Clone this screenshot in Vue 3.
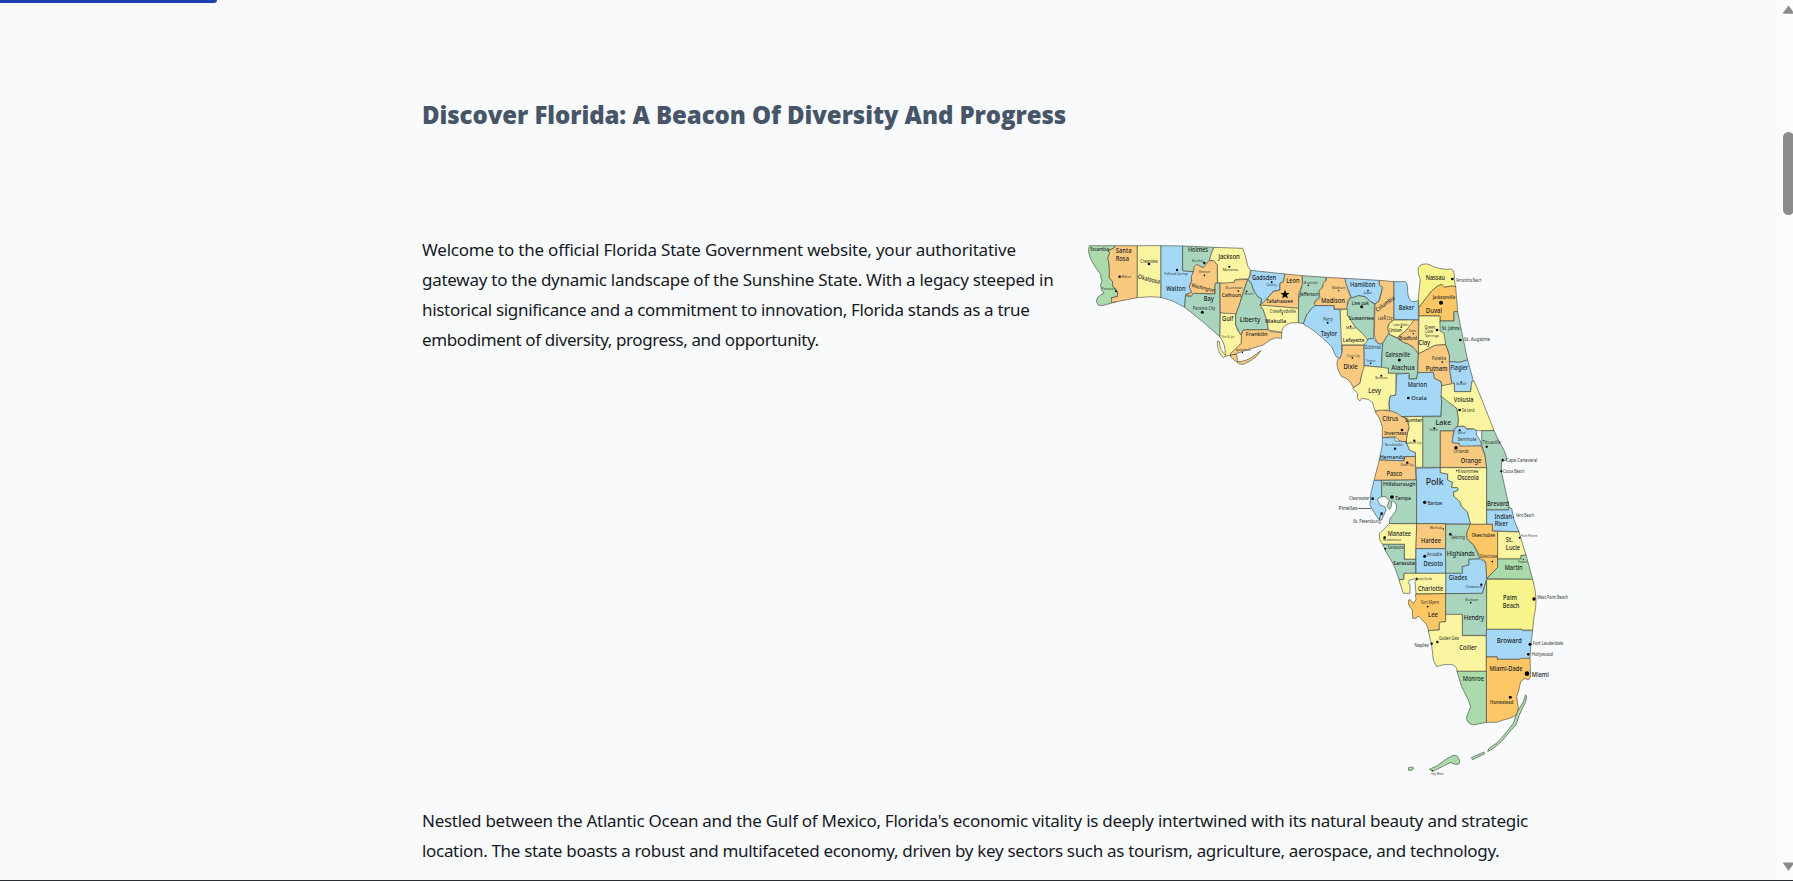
<script setup>
const G = '#abdaab', T = '#a9d4bd', O = '#fac980', D = '#fec766', Y = '#fbf4a0', L = '#f8f48c', B = '#a5d8f7'

// Every region is drawn on its own grid at three units per pixel.
const regions = [
  {
    x: 1080, y: 235,
    counties: [
      [G, 'M28 32L106 32 103 38 85 47 89 55 84 68 88 95 88 128 98 140 98 153 113 171 112 185 95 188 97 195 110 200 70 211 55 211Q45 200 52 188Q62 178 72 175Q62 165 62 150L66 138Q60 122 62 118L45 95Q26 68 25 45Z'],
      [O, 'M106 32L172 32 172 188 94 203 95 188 112 185 113 171 98 153 98 140 88 128 88 95 84 68 89 55 85 47 103 38Z'],
      [Y, 'M172 32H243V187Q210 183 172 188Z'],
      [B, 'M243 32L308 33V107L340 110 334 140 328 155 338 172 317 178 314 217Q280 195 243 187Z'],
      [T, 'M308 33L402 37 396 50 390 80 382 96 370 98 350 90 340 110 308 107Z'],
      [Y, 'M402 37L488 40Q498 65 500 80Q502 96 512 106L506 132 480 132 465 135 463 142 450 146 412 144 412 90 400 77 388 75 396 50Z'],
      [O, 'M340 110L343 95 350 88 370 98 386 78 400 76 412 90 412 145 405 150 405 177 340 175 334 184 317 180 335 172 328 155 335 140 334 125Z'],
      [T, 'M314 217L316 183 334 184 340 175 405 177 405 145 420 143 420 305Q370 260 314 217Z'],
      [O, 'M420 145L463 142 465 135 503 133 490 170 478 210 467 240 421 234Z'],
      [Y, 'M421 234L467 236 467 270 475 290 485 300 484 325 452 360 436 364Q438 330 420 305Z'],
      [Y, 'M412 318Q410 350 430 368L438 362Q418 345 418 320Z'],
      [B, 'M512 106L615 117 610 140 600 145 600 165 580 168 550 205 543 210 545 192 533 185 520 165 514 145 505 133 512 120Z'],
      [T, 'M503 133L514 145 520 165 533 185 545 192 540 210 550 225 562 258 565 284 490 285 482 300 467 270 467 240 478 210Z'],
      [O, 'M490 285L565 284 572 290 605 292 605 310Q585 305 570 315L550 330 500 345 450 363 452 355 484 325 484 300Z'],
      [O, 'M452 360L470 358 473 380Q500 380 525 360L543 347Q530 368 510 378L490 388Q475 390 452 365Z'],
    ],
    labels: [
      ['Escambia', 59, 47, 15, 57], ['Santa', 131, 55, 18, 47], ['Rosa', 127, 78, 18, 40], ['Okaloosa', 207, 139, 18, 68, 14],
      ['Walton', 288, 169, 19, 58], ['Holmes', 354, 51, 18, 60], ['Jackson', 447, 71, 18, 65], ['Washington', 370, 164, 15, 72, 14],
      ['Bay', 386, 197, 18, 30], ['Calhoun', 454, 186, 17, 58], ['Gulf', 443, 258, 18, 34], ['Liberty', 510, 260, 20, 62],
      ['Franklin', 530, 304, 17, 65], ['Gadsden', 552, 134, 18, 72], ['Crestview', 207, 83, 11, 52], ['Milton', 139, 129, 9, 29],
      ['Pensacola', 87, 165, 10, 43], ['DeFuniak Springs', 288, 121, 10, 71], ['Bonifay', 353, 82, 9, 34], ['Marianna', 451, 108, 10, 46],
      ['Vernon', 373, 114, 10, 34], ['Panama City', 372, 226, 13, 68], ['Blountstown', 462, 162, 9, 51], ['Bristol', 507, 179, 9, 25],
      ['Quincy', 575, 153, 9, 31], ['Port St. Joe', 444, 310, 8, 37], ['Apalachicola', 490, 349, 8, 44],
    ],
    dots: [[207, 87, 4], [119, 125, 3.5], [108, 169, 3], [291, 105, 3.5], [373, 84, 3.5], [448, 95, 3], [373, 121, 2.5], [367, 232, 4.5], [475, 168, 2.5], [500, 169, 2.5], [575, 142, 2.5], [487, 353, 2]],
  },
  {
    x: 1260, y: 255,
    counties: [
      [O, 'M75 57L127 62V90L122 100 115 120 116 160 5 152 0 150 10 143 40 110 60 105 60 86 70 80Z'],
      [Y, 'M0 150L60 155 116 160 115 203 92 204Q65 212 65 232L25 225 22 200 10 165Z'],
      [T, 'M127 62L198 67 198 75 185 100 177 108 178 125 165 140 168 153 155 160 140 180 130 206 115 203 116 130 127 90Z'],
      [O, 'M198 67L255 70 258 80 263 100 268 115 272 125 262 140 262 162 222 162 222 152 165 152 163 143 180 128 177 107 188 97 190 85 200 75Z'],
      [B, 'M255 70L358 76 358 90 368 97 360 125 355 140 345 147 332 140 315 125 295 122 275 130 263 100 258 85Z'],
      [T, 'M272 130L295 122 315 125 332 140 343 147 341 250 325 252 322 257Q310 235 285 215L270 195 262 180 260 160 265 140Z'],
      [O, 'M358 76L402 80V195L388 205 383 215 387 235 368 265 360 268 350 260 343 240 345 147 358 138 365 110 368 97 358 90Z'],
      [B, 'M402 80L437 80Q443 82 443 110Q445 140 460 140Q470 142 475 135V195L402 193Z'],
      [L, 'M475 135Q477 100 481 75Q468 40 480 32Q498 20 520 35Q555 46 573 42Q585 45 583 75L587 95 575 93 553 97 545 88 530 95 515 108 477 157Z'],
      [D, 'M477 157L515 108 530 95 545 88 553 97 575 93 587 95 593 170 582 170 582 198 540 198 540 183 477 183Z'],
      [Y, 'M477 183L540 183 540 200 557 245 557 269 525 271 475 297Z'],
      [T, 'M540 198L582 198 582 170 593 170 605 230 623 315 598 322 568 320 568 300 557 270 552 235 540 228Z'],
      [Y, 'M388 205L402 195 462 195 460 202 440 225 412 248 390 240 383 222Z'],
      [O, 'M462 195L475 195 475 297Q460 270 430 262L412 248 440 225Z'],
      [Y, 'M240 165L262 162 262 180 285 215Q310 235 325 257L312 270 240 270Z'],
      [B, 'M165 152L222 152 222 163 240 163 246 300 240 310 228 305 215 275Q165 225 130 207L140 180 155 160Z'],
      [O, 'M247 271L312 271 313 345 305 360 300 385 280 398Q268 370 245 365Q225 335 233 313L240 310 247 290Z'],
      [B, 'M312 271L325 252 341 250 350 262 360 268 368 265 364 337 313 332Z'],
      [T, 'M368 265L385 237 412 250 430 262Q460 270 475 297L473 353 470 372 447 372 447 355 385 355 385 340 364 340Z'],
      [O, 'M475 297L525 271 557 269 568 300 568 320 570 350 575 380 572 390 545 392 543 380 523 370 520 352 473 353Z'],
      [B, 'M568 320L598 322 623 315 640 378 632 400 632 410 583 410 583 385 575 380 570 350Z'],
      [B, 'M410 357L447 355 447 372 470 372 473 353 520 352 523 370 543 380 545 392 545 440 543 483 390 485 388 445 390 423 407 420Z'],
      [Y, 'M313 332L364 337 385 340 385 355 408 355 407 420 390 423 386 445 390 485 385 465 345 468 338 443 325 433 305 430 300 438 292 430 293 415 278 400 300 385 305 360Z'],
      [Y, 'M545 392L583 385 583 410 632 410 635 380 642 378Q665 430 702 527H650L640 522 620 520 610 513 593 515 595 495 590 460 560 440 543 425Z'],
    ],
    labels: [
      ['Leon', 99, 84, 18, 40], ['Tallahassee', 59, 143, 15, 80], ['Crawfordville', 68, 173, 12, 77], ['Wakulla', 47, 204, 17, 64],
      ['Jefferson', 147, 122, 14, 55], ['Madison', 219, 144, 19, 72], ['Hamilton', 308, 97, 18, 76], ['Live oak', 301, 149, 15, 51],
      ['Suwannee', 304, 196, 15, 76], ['Columbia', 376, 152, 16, 67, -36], ['Baker', 439, 164, 19, 46], ['Nassau', 526, 74, 19, 58],
      ['Jacksonville', 552, 131, 16, 68], ['Duval', 522, 173, 19, 49], ['St. Johns', 572, 226, 14, 53], ['Clay', 493, 270, 18, 35],
      ['Bradford', 444, 255, 14, 54], ['Union', 406, 232, 14, 38], ['Lafayette', 281, 262, 15, 65], ['Taylor', 207, 243, 18, 49],
      ['Dixie', 272, 343, 19, 43], ['Gilchrist', 338, 281, 13, 49], ['Gainseville', 413, 307, 18, 75], ['Alachua', 429, 346, 19, 70],
      ['Putnam', 530, 348, 19, 66], ['Flagler', 598, 346, 18, 53], ['Marion', 472, 396, 18, 58], ['Ocala', 477, 436, 17, 46],
      ['Levy', 344, 414, 19, 38], ['Volusia', 611, 440, 19, 59], ['St. Augstine', 651, 258, 13.5, 78], ['Fernandina Beach', 626, 80, 11, 76],
      ['Monticello', 152, 87, 9, 43], ['Madison', 236, 103, 9, 40], ['Jasper', 324, 118, 9, 25], ['Perry', 204, 197, 11, 28],
      ['Mayo', 272, 222, 10, 28], ['Lake City', 376, 195, 11, 44], ['Lake Butler', 423, 213, 8, 46], ['Starke', 457, 231, 8, 22],
      ['Green', 510, 223, 11, 33], ['Cove', 507, 235, 11, 24], ['Springs', 516, 247, 10, 42], ['Cross City', 280, 305, 10, 40],
      ['Trenton', 332, 320, 8, 28], ['Palatka', 537, 316, 11, 43], ['Bronson', 364, 373, 9, 37], ['Bunnell', 604, 389, 8, 29], ['De land', 624, 470, 12, 38],
    ],
    dots: [[35, 81, 2.5], [67, 177, 2], [145, 91, 2.5], [236, 107, 2], [324, 107, 2.5], [305, 155, 4.5], [203, 203, 3], [272, 214, 2.5], [375, 183, 2], [424, 216, 2.5], [460, 236, 2], [531, 225, 4], [543, 143, 6], [577, 72, 4], [601, 255, 4], [277, 309, 2.5], [332, 325, 2.5], [418, 315, 4.5], [547, 321, 2.5], [364, 362, 3], [604, 381, 2.5], [445, 429, 4], [599, 465, 4]],
  },
  {
    x: 1330, y: 400,
    counties: [
      [T, 'M333 -12L350 2 380 25 385 55 383 78 375 82 370 93 331 93V202H278V50L333 50 335 5Z'],
      [Y, 'M216 50L278 50V202H257L256 158 245 155 238 150 228 127 232 100 237 85 235 70 230 55Z'],
      [O, 'M135 35Q148 28 165 31Q188 32 202 40L215 50 230 55 237 80 232 100 228 127 210 123 195 110 157 113 157 80 148 55Z'],
      [B, 'M157 113L195 113 195 123 228 125 238 150 256 158 256 170 225 170 222 183 148 180 157 135Z'],
      [O, 'M148 180L222 183 225 170 256 170V205L258 240 132 241Z'],
      [B, 'M132 241L155 241 155 290 142 297 150 315 165 320 168 330 155 360 146 358Q130 335 120 315Q120 280 132 241Z'],
      [T, 'M155 241L260 240 260 370 178 371 180 355Q200 335 200 320Q198 303 185 303Q185 325 178 328L172 320 178 300 165 290 155 290Z'],
      [B, 'M258 205L331 203 331 218 353 222 353 240 368 247 365 262 383 263Q390 273 370 276L373 290 390 305 395 320 412 335 422 372 260 371V240Z'],
      [O, 'M331 93L370 93 368 128 388 130 390 137 452 137 465 165 470 203 331 202Z'],
      [B, 'M375 88L383 79 405 80 410 88 430 87 438 90 440 105 450 120 455 137 425 138 388 138 388 130 366 128 370 105Z'],
      [Y, 'M331 203L470 203V373H422L412 335 395 320 390 305 373 290 370 276Q390 273 383 263L365 262 368 247 353 240 353 222 331 218Z'],
      [T, 'M455 92L492 92 510 130Q530 160 530 180L515 185 514 215 522 250 535 310 540 330 470 330V203L465 165 455 135Z'],
      [B, 'M470 330L535 330 535 323 545 325 552 360 567 395 487 393V373H470Z'],
    ],
    labels: [
      ['Citrus', 181, 63, 18, 48], ['Sumter', 251, 65, 16, 53], ['Lake', 340, 75, 19, 47], ['Inverness', 196, 104, 14, 67], ['Brooksville', 191, 138, 10, 52],
      ['Hernando', 187, 176, 15, 76], ['Pasco', 193, 229, 18, 47], ['Hillsborough', 208, 258, 17, 98], ['Polk', 314, 256, 24, 54],
      ['Tampa', 219, 299, 15, 48], ['Bartow', 315, 314, 14, 43], ['Orange', 423, 190, 18, 61], ['Seminole', 411, 124, 13, 56],
      ['Osceola', 414, 239, 18, 65], ['Brevard', 504, 319, 18, 66], ['Indian', 520, 356, 18, 53], ['River', 514, 379, 18, 40],
      ['Orlando', 394, 158, 12, 46], ['Kissimmee', 414, 218, 11, 61], ['Titusville', 485, 133, 12, 55], ['Tavares', 311, 94, 8, 26],
      ['Sanford', 394, 102, 8, 25], ['Bushnell City', 250, 132, 9, 49], ['Dade City', 231, 199, 9, 39], ['Clearwater', 88, 299, 12, 62],
      ['Pinellas', 54, 330, 13.5, 57], ['St. Petersburg', 111, 370, 12, 82], ['Cape Canaveral', 575, 186, 12, 94], ['Cocoa Beach', 551, 220, 12, 64], ['Vero Beach', 585, 351, 11, 55],
    ],
    dots: [[216, 90, 4], [253, 122, 3.5], [195, 146, 3.5], [232, 188, 3.5], [313, 85, 3], [389, 91, 3.5], [378, 143, 5], [470, 140, 3.5], [518, 180, 3.5], [514, 214, 3.5], [380, 212, 2], [186, 291, 5.5], [284, 307, 5], [128, 296, 4], [155, 341, 4], [550, 352, 2]],
  },
  {
    x: 1330, y: 510,
    counties: [
      [Y, 'M178 41L260 41 257 148 223 148 223 103 158 103Q145 90 148 72Z'],
      [T, 'M158 103L223 103 223 148 257 148 257 190 222 190 222 208 207 209Q195 165 170 130L162 112Z'],
      [O, 'M260 41H347V116H258Z'],
      [B, 'M258 116H347V190H258Z'],
      [T, 'M347 43L420 43 418 55 410 70 412 88 430 105 440 125 450 147 417 148 417 168 397 170 397 190 347 190Z'],
      [D, 'M420 43H487V63L503 64V172L470 205 466 155 450 140 440 120 430 103 412 88 410 70Z'],
      [Y, 'M503 64L567 66 580 110 588 135 573 137V147H503Z'],
      [G, 'M503 147H573V137L588 135 608 208 470 206 503 172Z'],
      [B, 'M397 170L417 165 417 148 450 147 467 157 470 205 465 225 457 250 347 251V190H397Z'],
      [Y, 'M222 190H347V251H258L255 215 262 205 240 210 235 218 240 225 240 250 220 250 207 210 222 208Z'],
      [D, 'M256 253L347 251V335L328 337 327 360 296 362Q290 338 276 330Q265 312 258 325L248 325 247 300Q232 285 236 270Q240 264 244 275L252 280 258 268Z'],
      [T, 'M347 251L457 250 470 210V376H397V314H347Z'],
      [L, 'M470 208H608Q626 270 612 320L608 360H577L575 358H470Z'],
    ],
    labels: [
      ['Manatee', 208, 78, 18, 70], ['Bradenton', 186, 94, 9, 54], ['Sarasota', 197, 117, 12, 49], ['Sarasota', 222, 165, 17, 66], ['Hardee', 303, 98, 18, 60],
      ['Wachula', 318, 57, 9, 38], ['Arcadia', 313, 138, 12, 45], ['Desoto', 310, 168, 18, 59], ['Highlands', 392, 139, 18, 84],
      ['Sebring', 384, 86, 12, 42], ['Okeechobee', 460, 81, 14, 70], ['Okeechobee', 476, 143, 12, 53], ['St.', 538, 97, 18, 21],
      ['Lucie', 549, 120, 18, 43], ['Stuart', 578, 160, 10, 27], ['Martin', 551, 180, 18, 54], ['Glades', 384, 211, 18, 55],
      ['Clewiston', 432, 235, 10, 50], ['Charlotte', 302, 244, 18, 76], ['Punta Gorda', 282, 209, 8, 49], ['Fort Myers', 300, 283, 11, 54],
      ['Lee', 309, 321, 19, 30], ['Moorhaven', 425, 273, 9, 39], ['Hendry', 432, 331, 18, 61], ['Palm', 540, 269, 18, 42],
      ['Beach', 543, 293, 18, 50], ['Fort Pierce', 598, 81, 10, 48], ['West Palm Beach', 668, 267, 12, 93],
    ],
    dots: [[164, 83, 4], [166, 116, 3], [340, 57, 2], [284, 139, 4.5], [361, 73, 4], [487, 155, 2.5], [569, 83, 3], [580, 149, 2], [454, 224, 3.5], [260, 208, 3], [293, 290, 2.5], [422, 278, 2.5], [612, 267, 5]],
  },
  {
    x: 1370, y: 600,
    counties: [
      [Y, 'M227 43H277V107H349V214H261Q262 195 240 193Q215 193 200 200L190 180Q188 140 175 92L208 90V67L227 65Z'],
      [B, 'M349 88H455L457 92H488L482 140 480 175 450 178H382V171H349Z'],
      [D, 'M349 171H382V178H450L453 175H480L482 230 475 240 465 235 452 245Q448 270 440 290L445 325 440 345Q420 357 400 360L380 367H349Z'],
      [G, 'M261 214H349V367L310 375Q288 370 290 350L302 320 295 300 275 260Z'],
      [G, 'M467 284Q472 288 467 305L448 345 438 375 415 400Q390 435 353 455L356 446Q385 430 405 402L430 370 442 335 460 305Z'],
      [G, 'M304 473L342 456 344 461 308 479Z'],
      [G, 'M178 508L200 498 225 480 245 468Q262 460 268 480Q272 495 258 493L240 488 220 498 190 514Z'],
      [G, 'M115 503L128 501Q134 509 125 511L116 511Z'],
    ],
    labels: [
      ['Collier', 294, 150, 18, 53], ['Golden Gate', 237, 121, 13.5, 60], ['Naples', 155, 140, 13.5, 43], ['Broward', 418, 130, 19, 75],
      ['Fort Lauderdale', 534, 135, 13.5, 91], ['Hollywood', 517, 167, 12, 63], ['Miami-Dade', 408, 213, 18, 99], ['Miami', 511, 231, 19, 51],
      ['Monroe', 310, 243, 18, 64], ['Homestead', 395, 313, 17, 70], ['Key West', 202, 524, 8, 37],
    ],
    dots: [[185, 131, 3.5], [202, 126, 3.5], [480, 133, 4.5], [475, 163, 4], [471, 221, 7], [421, 292, 4.5], [187, 512, 2]],
  },
]

const intro = [
  'Welcome to the official Florida State Government website, your authoritative',
  'gateway to the dynamic landscape of the Sunshine State. With a legacy steeped in',
  'historical significance and a commitment to innovation, Florida stands as a true',
  'embodiment of diversity, progress, and opportunity.',
]
const economy = [
  "Nestled between the Atlantic Ocean and the Gulf of Mexico, Florida's economic vitality is deeply intertwined with its natural beauty and strategic",
  'location. The state boasts a robust and multifaceted economy, driven by key sectors such as tourism, agriculture, aerospace, and technology.',
]
</script>

<template>
  <div class="page">
    <div class="progress"></div>
    <main class="content">
      <h1>Discover Florida: A Beacon Of Diversity And Progress</h1>
      <section class="intro">
        <p><span v-for="(line, i) in intro" :key="i" :class="['line', 'a' + i]">{{ line }}</span></p>
        <svg class="map" viewBox="1080 235 500 545" role="img" aria-label="Florida counties">
          <g v-for="r in regions" :key="'c' + r.x + r.y" class="counties" :transform="`translate(${r.x} ${r.y}) scale(.33333)`">
            <path v-for="(c, i) in r.counties" :key="i" :fill="c[0]" :d="c[1]" />
          </g>
          <g v-for="r in regions" :key="'l' + r.x + r.y" class="labels" :transform="`translate(${r.x} ${r.y}) scale(.33333)`">
            <circle v-for="(d, i) in r.dots" :key="i" :cx="d[0]" :cy="d[1]" :r="d[2]" />
            <text
              v-for="(l, i) in r.labels" :key="'t' + i" :x="l[1]" :y="l[2]" :font-size="l[3] < 14 ? l[3] * 1.2 : l[3] * 1.06" :textLength="l[4]"
              :class="{ city: l[3] < 14 }" lengthAdjust="spacingAndGlyphs"
              :transform="l[5] ? `rotate(${l[5]} ${l[1]} ${l[2] - 5})` : undefined"
            >{{ l[0] }}</text>
          </g>
          <path class="star" d="M1285 289.6l1.2 3.3h3.5l-2.8 2.1 1 3.4-2.9-2-2.9 2 1-3.4-2.8-2.1h3.5z" />
          <path class="leader" d="M1358.5 508.5H1371M1379 519.5l2-5" />
        </svg>
      </section>
      <p class="economy"><span v-for="(line, i) in economy" :key="i" :class="['line', 'b' + i]">{{ line }}</span></p>
    </main>
    <aside class="scrollbar">
      <svg class="arrow up" viewBox="0 0 12 9"><path d="M6 0L12 8Q12 9 11 9H1Q0 9 0 8Z" /></svg>
      <div class="thumb"></div>
      <svg class="arrow down" viewBox="0 0 12 9"><path d="M6 9L12 1Q12 0 11 0H1Q0 0 0 1Z" /></svg>
    </aside>
    <div class="edge"></div>
  </div>
</template>

<style>
html, body { margin: 0; overflow: hidden; }
</style>

<style scoped>
.page { position: relative; box-sizing: border-box; width: 100%; height: 881px; overflow: hidden; background: #f8fafc; color: #16191e; font-family: "Noto Sans", "Open Sans", sans-serif; }
.progress { position: absolute; top: 0; left: 0; width: 217px; height: 3px; background: #1e40af; border-radius: 0 0 3px 0; }
.content { width: 1160px; margin-left: 422px; padding-top: 97px; }
h1 { margin: 0; height: 36px; line-height: 36px; font-family: "Open Sans", "Noto Sans", sans-serif; font-size: 24px; font-weight: 800; color: #475569; white-space: nowrap; letter-spacing: -.07px; }
.intro { display: flex; margin-top: 102px; height: 545px; }
.intro p { width: 658px; margin: 0; flex: none; }
.map { width: 500px; height: 545px; flex: none; }
.line { display: block; height: 30px; line-height: 30px; font-size: 17px; white-space: nowrap; }
.a0 { letter-spacing: -.213px; }
.a1 { letter-spacing: -.264px; }
.a2 { letter-spacing: -.315px; }
.a3 { letter-spacing: -.395px; }
.b0 { letter-spacing: -.275px; }
.b1 { letter-spacing: -.317px; }
.economy { margin: 26px 0 0; }
.counties path { stroke: #33382f; stroke-width: 1.7; stroke-linejoin: round; }
.labels text { text-anchor: middle; fill: #20241f; font-weight: 500; }
.labels .city { font-weight: 400; fill: #30342f; }
.labels circle, .star { fill: #000; }
.leader { stroke: #222; stroke-width: .7; fill: none; }
.scrollbar { position: absolute; top: 0; right: 0; width: 15px; height: 881px; background: #fcfcfc; }
.thumb { position: absolute; left: 5px; top: 132px; width: 11px; height: 83px; border-radius: 6px; background: #8b8b8b; }
.arrow { position: absolute; left: 5px; width: 11px; height: 9px; fill: #8b8b8b; }
.up { top: 5px; }
.down { top: 862px; }
.edge { position: absolute; left: 0; bottom: 0; width: 100%; height: 1px; background: #292d30; }
</style>
